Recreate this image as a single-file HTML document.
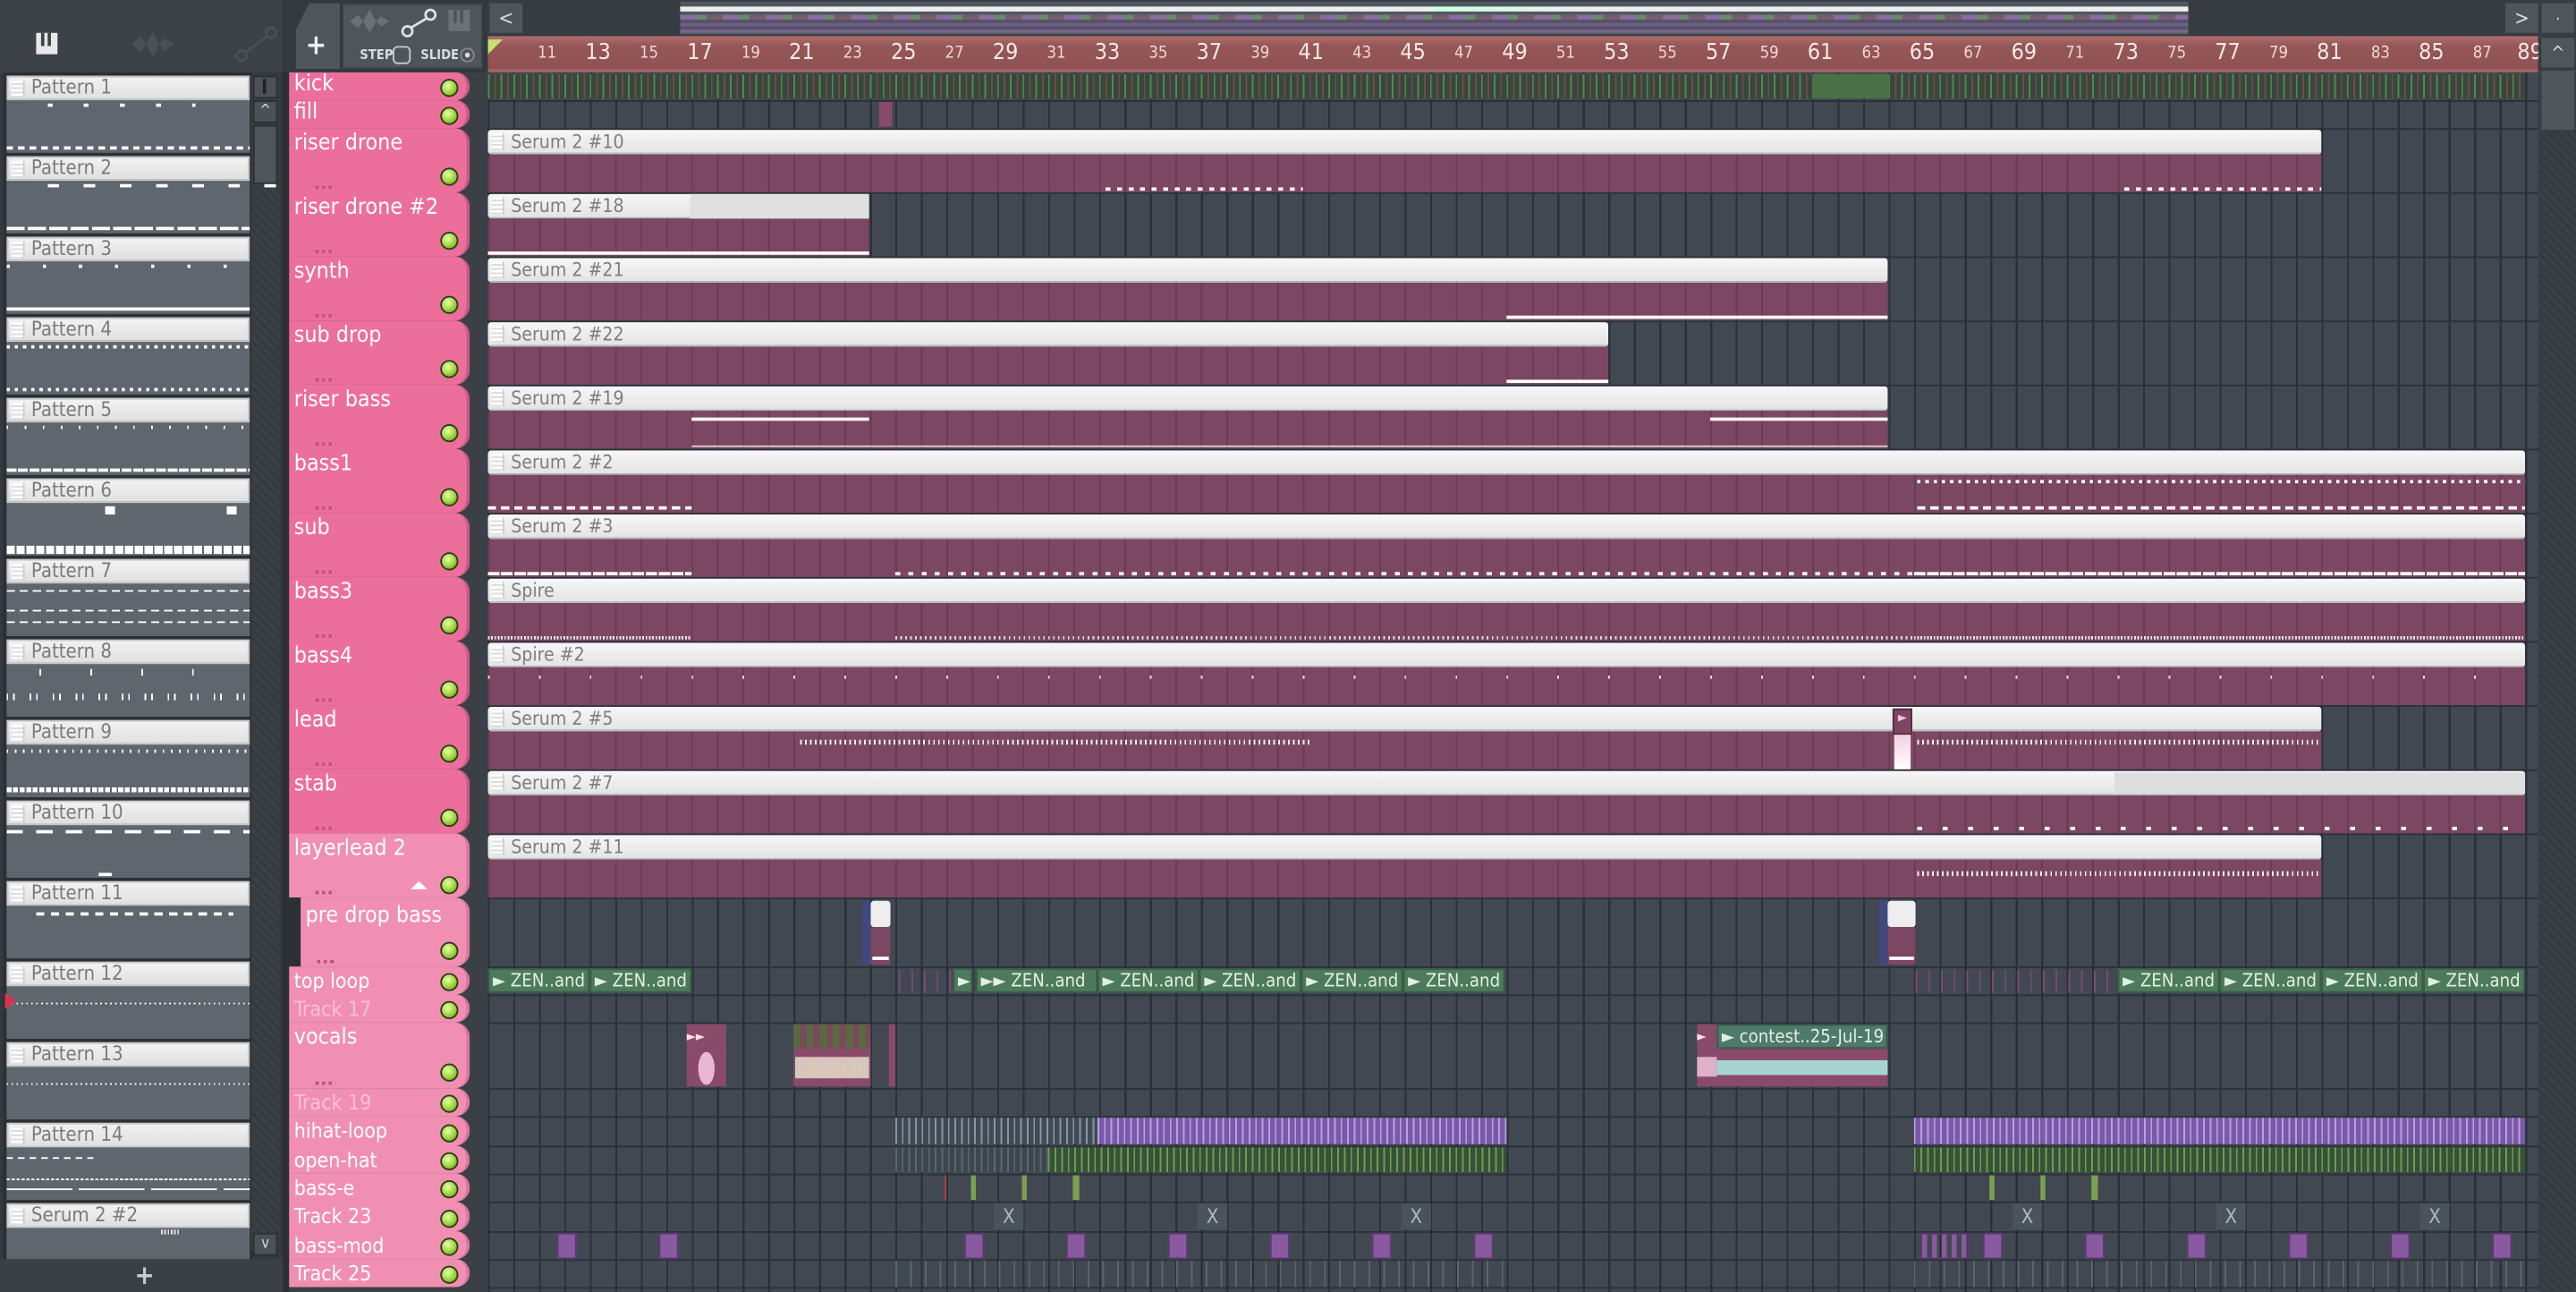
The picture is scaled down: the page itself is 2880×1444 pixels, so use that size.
<!DOCTYPE html>
<html><head><meta charset="utf-8">
<style>
*{margin:0;padding:0;box-sizing:border-box}
html,body{width:2880px;height:1444px;overflow:hidden;background:#3a4046}
#w{position:absolute;left:0;top:0;width:1568px;height:786px;transform:scale(1.83674,1.83715);transform-origin:0 0;background:#3a4046;font-family:"DejaVu Sans Condensed","DejaVu Sans","Liberation Sans",sans-serif;overflow:hidden}
.a{position:absolute}
.pat{position:absolute;left:4px;width:148px;height:47px;background:#5f666e}
.pat .h{position:absolute;left:0;top:0;width:148px;height:15px;background:linear-gradient(#f2f2f2,#e0e0e0);border:1px solid #c8c8c8;color:#7b7b7b;font-size:12px;line-height:13px;padding-left:14px}
.pat .h:before,.s .h:before{content:"";position:absolute;left:2px;top:2px;width:7px;height:10px;background:repeating-linear-gradient(#fff 0 1.5px,#ddd 1.5px 2.6px);border-right:1px solid #ccc}
.pat .n{position:absolute;left:0;width:148px;height:2px;background:repeating-linear-gradient(90deg,#fff 0 4px,transparent 4px 7px)}
.th{position:absolute;left:176px;width:110px;background:#ec6f9b;border-radius:0 9px 9px 0;color:#fff;font-size:13.5px;line-height:15px;padding-left:3px;padding-top:2px;border-right:2px solid #c85a80}
.th.l{background:#f08fb2;border-right-color:#d77799}
.th .led{position:absolute;right:5px;bottom:2px;width:11px;height:11px;border-radius:50%;background:radial-gradient(circle at 40% 35%,#e8ffb0,#9cd43a 55%,#5a8a1a);border:1.5px solid #2c3a18}
.th .dots{position:absolute;left:16px;bottom:2px;width:12px;height:2px;background:repeating-linear-gradient(90deg,#c0507a 0 2px,transparent 2px 4px)}
.s{position:absolute}
.s .h{position:absolute;left:0;top:0;right:0;height:15px;background:linear-gradient(#f7f7f7,#e4e4e4);border-radius:2px;border-bottom:1px solid #bbb;color:#7e7e7e;font-size:11.5px;line-height:14px;padding-left:14px}
.s .b{position:absolute;left:0;right:0;top:15px;bottom:0;background:repeating-linear-gradient(90deg,#6a3a53 0 1px,#7b4762 1px 15.5px)}
.g{position:absolute;left:297px;top:44px;width:1248px;height:742px;background:repeating-linear-gradient(90deg,#2b3038 0 1.2px,#414852 1.2px 15.5px)}
.hl{position:absolute;left:297px;width:1248px;height:1px;background:#2b3038}
.rn{position:absolute;top:27px;color:#f3d6d6;font-size:10px;transform:translateX(-50%)}
.rn.b{font-size:13.5px;top:24px;color:#fbe8e8}
.zen{position:absolute;height:15px;background:#4d7a5c;border:1px solid #3a5c45;color:#e0f0e0;font-size:11px;line-height:13px;padding-left:2px;overflow:hidden;white-space:nowrap}
.pm{position:absolute;height:16px;background:#8a5aa0;border:1px solid #5a3a70}
</style></head><body><div id="w">

<div class="a" style="left:0;top:0;width:176px;height:44px;background:#3c4247"></div>
<div class="a" style="left:22px;top:20px;width:13px;height:13px;background:#e8e8e8"></div>
<div class="a" style="left:25px;top:20px;width:1.5px;height:8px;background:#3c4247"></div>
<div class="a" style="left:29px;top:20px;width:1.5px;height:8px;background:#3c4247"></div>
<svg class="a" style="left:78px;top:18px" width="30" height="18"><path d="M2 9 L8 4 L11 9 L15 1 L19 9 L22 5 L28 9 L22 13 L19 9 L15 17 L11 9 L8 14 Z" fill="#4a5156"/></svg>
<svg class="a" style="left:143px;top:16px" width="28" height="22"><circle cx="4" cy="18" r="3" fill="none" stroke="#4a5156" stroke-width="1.6"/><circle cx="22" cy="4" r="3" fill="none" stroke="#4a5156" stroke-width="1.6"/><path d="M6 16 L20 6" stroke="#4a5156" stroke-width="1.6"/></svg>
<div class="a" style="left:0;top:44px;width:176px;height:742px;background:#33393e"></div>
<div class="a" style="left:2px;top:44px;width:152px;height:722px;background:#2b3034"></div>
<div class="a" style="left:153px;top:46px;width:17px;height:714px;background:repeating-linear-gradient(45deg,#3a4045 0 2px,#343a3f 2px 4px)"></div>
<div class="a" style="left:154px;top:46px;width:15px;height:14px;background:#4a5258;border:1px solid #2a2f33"></div>
<div class="a" style="left:160px;top:48px;width:2px;height:9px;background:#222"></div>
<div class="a" style="left:154px;top:61px;width:15px;height:14px;background:#4a5258;border:1px solid #2a2f33;color:#ddd;font-size:9px;text-align:center;line-height:12px">^</div>
<div class="a" style="left:154px;top:76px;width:15px;height:36px;background:#4e565c;border:1px solid #2a2f33"></div>
<div class="a" style="left:154px;top:750px;width:15px;height:14px;background:#4a5258;border:1px solid #2a2f33;color:#ddd;font-size:9px;text-align:center;line-height:12px">v</div>
<div class="a" style="left:0;top:766px;width:176px;height:20px;background:#3a4045;color:#c8ccd0;font-size:16px;text-align:center;line-height:20px;font-weight:bold">+</div>

<div class="pat" style="top:46px"><div class="h">Pattern 1</div><div class="n" style="top:17px;width:90px;left:25px;background:repeating-linear-gradient(90deg,#fff 0 3px,transparent 3px 22px)"></div><div class="n" style="top:43px"></div></div>
<div class="pat" style="top:95px"><div class="h">Pattern 2</div><div class="n" style="top:17px;left:25px;width:145px;background:repeating-linear-gradient(90deg,#fff 0 7px,transparent 7px 22px)"></div><div class="n" style="top:43px;background:repeating-linear-gradient(90deg,#fff 0 11px,transparent 11px 13px)"></div></div>
<div class="pat" style="top:144px"><div class="h">Pattern 3</div><div class="n" style="top:17px;background:repeating-linear-gradient(90deg,#fff 0 2px,transparent 2px 22px)"></div><div class="n" style="top:43px;background:#fff"></div></div>
<div class="pat" style="top:193px"><div class="h">Pattern 4</div><div class="n" style="top:17px;background:repeating-linear-gradient(90deg,#fff 0 2px,transparent 2px 5px)"></div><div class="n" style="top:43px;background:repeating-linear-gradient(90deg,#fff 0 2px,transparent 2px 5px)"></div></div>
<div class="pat" style="top:242px"><div class="h">Pattern 5</div><div class="n" style="top:17px;background:repeating-linear-gradient(90deg,#fff 0 1px,transparent 1px 11px)"></div><div class="n" style="top:43px;background:repeating-linear-gradient(90deg,#fff 0 6px,transparent 6px 7px)"></div></div>
<div class="pat" style="top:291px"><div class="h">Pattern 6</div><div class="a" style="left:60px;top:17px;width:6px;height:5px;background:#fff"></div><div class="a" style="left:134px;top:17px;width:6px;height:5px;background:#fff"></div><div class="n" style="top:41px;height:5px;background:repeating-linear-gradient(90deg,#fff 0 5px,transparent 5px 6px)"></div></div>
<div class="pat" style="top:340px"><div class="h">Pattern 7</div><div class="n" style="top:19px;height:1px;background:repeating-linear-gradient(90deg,#fff 0 5px,transparent 5px 8px)"></div><div class="n" style="top:31px;height:1px;background:repeating-linear-gradient(90deg,#fff 0 5px,transparent 5px 8px)"></div><div class="n" style="top:38px;height:1px;background:repeating-linear-gradient(90deg,#fff 0 5px,transparent 5px 8px)"></div></div>
<div class="pat" style="top:389px"><div class="h">Pattern 8</div><div class="n" style="top:18px;height:4px;width:110px;left:20px;background:repeating-linear-gradient(90deg,#fff 0 1px,transparent 1px 31px)"></div><div class="n" style="top:33px;height:4px;background:repeating-linear-gradient(90deg,#fff 0 1px,transparent 1px 4px,#fff 4px 5px,transparent 5px 14px)"></div></div>
<div class="pat" style="top:438px"><div class="h">Pattern 9</div><div class="n" style="top:18px;background:repeating-linear-gradient(90deg,#fff 0 1px,transparent 1px 5px)"></div><div class="n" style="top:41px;height:3px;background:repeating-linear-gradient(90deg,#fff 0 3px,transparent 3px 4px)"></div></div>
<div class="pat" style="top:487px"><div class="h">Pattern 10</div><div class="n" style="top:18px;background:repeating-linear-gradient(90deg,#fff 0 10px,transparent 10px 18px)"></div><div class="a" style="left:56px;top:44px;width:8px;height:2px;background:#fff"></div></div>
<div class="pat" style="top:536px"><div class="h">Pattern 11</div><div class="n" style="top:19px;left:18px;width:120px;background:repeating-linear-gradient(90deg,#fff 0 5px,transparent 5px 9px)"></div></div>
<div class="pat" style="top:585px"><div class="h">Pattern 12</div><div class="n" style="top:25px;height:1px;background:repeating-linear-gradient(90deg,#fff 0 1px,transparent 1px 3px)"></div></div>
<div class="a" style="left:3px;top:604px;width:0;height:0;border-top:5px solid transparent;border-bottom:5px solid transparent;border-left:7px solid #e03050"></div>
<div class="pat" style="top:634px"><div class="h">Pattern 13</div><div class="n" style="top:25px;height:1px;background:repeating-linear-gradient(90deg,#fff 0 1px,transparent 1px 3px)"></div></div>
<div class="pat" style="top:683px"><div class="h">Pattern 14</div><div class="n" style="top:21px;height:1px;width:55px"></div><div class="n" style="top:34px;height:1px;background:repeating-linear-gradient(90deg,#fff 0 2px,transparent 2px 3px)"></div><div class="n" style="top:40px;height:1px;background:repeating-linear-gradient(90deg,#fff 0 40px,transparent 40px 44px)"></div></div>
<div class="pat" style="top:732px;height:34px"><div class="h">Serum 2 #2</div><div class="a" style="left:94px;top:16px;width:12px;height:3px;background:repeating-linear-gradient(90deg,#ddd 0 1px,transparent 1px 2px)"></div></div>

<div class="a" style="left:172px;top:0;width:125px;height:44px;background:#33393e"></div>
<div class="a" style="left:180px;top:2px;width:27px;height:40px;background:#4e565c;border-radius:8px 0 0 0;clip-path:polygon(30% 0,100% 0,100% 100%,0 100%,0 40%)"></div>
<div class="a" style="left:186px;top:18px;color:#eee;font-size:17px;font-weight:bold">+</div>
<div class="a" style="left:208px;top:2px;width:86px;height:40px;background:#4e565c;border:1px solid #3a4045"></div>
<svg class="a" style="left:212px;top:6px" width="26" height="14"><path d="M1 7 L6 3 L9 7 L13 0 L17 7 L20 4 L25 7 L20 10 L17 7 L13 14 L9 7 L6 11 Z" fill="#6a7278"/></svg>
<svg class="a" style="left:244px;top:4px" width="22" height="20"><circle cx="4" cy="15" r="3" fill="none" stroke="#dde2e6" stroke-width="1.5"/><circle cx="18" cy="5" r="3" fill="none" stroke="#dde2e6" stroke-width="1.5"/><path d="M6 13 L16 7" stroke="#dde2e6" stroke-width="1.5"/></svg>
<div class="a" style="left:273px;top:6px;width:13px;height:13px;background:#6a7278"></div>
<div class="a" style="left:276px;top:6px;width:1.5px;height:8px;background:#4e565c"></div>
<div class="a" style="left:280px;top:6px;width:1.5px;height:8px;background:#4e565c"></div>
<div class="a" style="left:219px;top:29px;color:#d8dde0;font-size:8px;font-weight:bold">STEP</div>
<div class="a" style="left:239px;top:28px;width:11px;height:11px;border:1.5px solid #c8cdd0;border-radius:3px"></div>
<div class="a" style="left:256px;top:29px;color:#d8dde0;font-size:8px;font-weight:bold">SLIDE</div>
<div class="a" style="left:280px;top:29px;width:9px;height:9px;border:1.5px solid #888;border-radius:50%"></div>
<div class="a" style="left:283px;top:32px;width:3px;height:3px;background:#ddd;border-radius:50%"></div>
<div class="a" style="left:297px;top:0;width:1271px;height:22px;background:#363c41"></div>
<div class="a" style="left:298px;top:2px;width:20px;height:18px;background:#4e565c;color:#ddd;font-size:12px;text-align:center;line-height:18px">&lt;</div>
<div class="a" style="left:1525px;top:2px;width:20px;height:18px;background:#4e565c;color:#ddd;font-size:12px;text-align:center;line-height:18px">&gt;</div>
<div class="a" style="left:1547px;top:2px;width:20px;height:18px;background:#4e565c;color:#ddd;font-size:10px;text-align:center;line-height:16px">.</div>
<div class="a" style="left:414px;top:1px;width:918px;height:20px;background:#4f585f"></div>
<div class="a" style="left:414px;top:4px;width:918px;height:3px;background:linear-gradient(90deg,#eee 0,#eee 50%,#cfd 50%,#eee 60%,#eee 100%)"></div>
<div class="a" style="left:414px;top:9px;width:918px;height:3px;background:repeating-linear-gradient(90deg,#8a6aa0 0 10px,#6a8a6a 10px 16px,#7a5a70 16px 26px)"></div>
<div class="a" style="left:414px;top:14px;width:918px;height:2px;background:#8a5aa8;opacity:.7"></div>
<div class="a" style="left:414px;top:18px;width:918px;height:2px;background:#9a6ab0;opacity:.6"></div>
<div class="a" style="left:297px;top:22px;width:1248px;height:22px;background:linear-gradient(#b06e6e,#955656 30%,#8f5252);border-bottom:2px solid #a76666"></div>
<div class="a" style="left:297px;top:24px;width:0;height:0;border-left:9px solid #c8e070;border-bottom:9px solid transparent"></div>
<div class="rn" style="left:333px">11</div><div class="rn b" style="left:364px">13</div><div class="rn" style="left:395px">15</div><div class="rn b" style="left:426px">17</div><div class="rn" style="left:457px">19</div><div class="rn b" style="left:488px">21</div><div class="rn" style="left:519px">23</div><div class="rn b" style="left:550px">25</div><div class="rn" style="left:581px">27</div><div class="rn b" style="left:612px">29</div><div class="rn" style="left:643px">31</div><div class="rn b" style="left:674px">33</div><div class="rn" style="left:705px">35</div><div class="rn b" style="left:736px">37</div><div class="rn" style="left:767px">39</div><div class="rn b" style="left:798px">41</div><div class="rn" style="left:829px">43</div><div class="rn b" style="left:860px">45</div><div class="rn" style="left:891px">47</div><div class="rn b" style="left:922px">49</div><div class="rn" style="left:953px">51</div><div class="rn b" style="left:984px">53</div><div class="rn" style="left:1015px">55</div><div class="rn b" style="left:1046px">57</div><div class="rn" style="left:1077px">59</div><div class="rn b" style="left:1108px">61</div><div class="rn" style="left:1139px">63</div><div class="rn b" style="left:1170px">65</div><div class="rn" style="left:1201px">67</div><div class="rn b" style="left:1232px">69</div><div class="rn" style="left:1263px">71</div><div class="rn b" style="left:1294px">73</div><div class="rn" style="left:1325px">75</div><div class="rn b" style="left:1356px">77</div><div class="rn" style="left:1387px">79</div><div class="rn b" style="left:1418px">81</div><div class="rn" style="left:1449px">83</div><div class="rn b" style="left:1480px">85</div><div class="rn" style="left:1511px">87</div><div class="rn b" style="left:1540px">89</div>
<div class="a" style="left:1545px;top:22px;width:23px;height:764px;background:repeating-linear-gradient(45deg,#3a4045 0 2px,#343a3f 2px 4px)"></div>
<div class="a" style="left:1547px;top:23px;width:20px;height:18px;background:#4e565c;color:#ddd;font-size:11px;text-align:center;line-height:20px">^</div>
<div class="a" style="left:1547px;top:43px;width:20px;height:36px;background:#4e565c"></div>

<div class="g"></div>
<div class="hl" style="top:61px"></div><div class="hl" style="top:78px"></div><div class="hl" style="top:117px"></div><div class="hl" style="top:156px"></div><div class="hl" style="top:195px"></div><div class="hl" style="top:234px"></div><div class="hl" style="top:273px"></div><div class="hl" style="top:312px"></div><div class="hl" style="top:351px"></div><div class="hl" style="top:390px"></div><div class="hl" style="top:429px"></div><div class="hl" style="top:468px"></div><div class="hl" style="top:507px"></div><div class="hl" style="top:546px"></div><div class="hl" style="top:588px"></div><div class="hl" style="top:605px"></div><div class="hl" style="top:622px"></div><div class="hl" style="top:662px"></div><div class="hl" style="top:679px"></div><div class="hl" style="top:697px"></div><div class="hl" style="top:714px"></div><div class="hl" style="top:731px"></div><div class="hl" style="top:749px"></div><div class="hl" style="top:766px"></div><div class="hl" style="top:783px"></div>

<div class="a" style="left:172px;top:44px;width:4px;height:742px;background:#2b3034"></div>
<div class="th" style="top:44px;height:17px;padding-top:0">kick<div class="led"></div></div>
<div class="th" style="top:61px;height:17px;padding-top:0">fill<div class="led"></div></div>
<div class="th" style="top:78px;height:39px">riser drone<div class="led" style="bottom:4px"></div><div class="dots"></div></div>
<div class="th" style="top:117px;height:39px">riser drone #2<div class="led" style="bottom:4px"></div><div class="dots"></div></div>
<div class="th" style="top:156px;height:39px">synth<div class="led" style="bottom:4px"></div><div class="dots"></div></div>
<div class="th" style="top:195px;height:39px">sub drop<div class="led" style="bottom:4px"></div><div class="dots"></div></div>
<div class="th" style="top:234px;height:39px">riser bass<div class="led" style="bottom:4px"></div><div class="dots"></div></div>
<div class="th" style="top:273px;height:39px">bass1<div class="led" style="bottom:4px"></div><div class="dots"></div></div>
<div class="th" style="top:312px;height:39px">sub<div class="led" style="bottom:4px"></div><div class="dots"></div></div>
<div class="th" style="top:351px;height:39px">bass3<div class="led" style="bottom:4px"></div><div class="dots"></div></div>
<div class="th" style="top:390px;height:39px">bass4<div class="led" style="bottom:4px"></div><div class="dots"></div></div>
<div class="th" style="top:429px;height:39px">lead<div class="led" style="bottom:4px"></div><div class="dots"></div></div>
<div class="th" style="top:468px;height:39px">stab<div class="led" style="bottom:4px"></div><div class="dots"></div></div>
<div class="th l" style="top:507px;height:39px">layerlead 2<div class="led" style="bottom:2px"></div><div class="dots"></div><div class="a" style="left:74px;top:29px;width:0;height:0;border-left:5px solid transparent;border-right:5px solid transparent;border-bottom:5px solid #fff"></div></div>
<div class="a" style="left:176px;top:546px;width:8px;height:42px;background:#2b3034"></div>
<div class="th l" style="top:546px;height:42px;left:183px;width:103px;padding-left:3px;padding-top:4px">pre drop bass<div class="led" style="bottom:4px"></div><div class="dots" style="left:10px"></div></div>
<div class="th l" style="top:588px;height:17px;font-size:12.5px;padding-top:1px">top loop<div class="led"></div></div>
<div class="th l" style="top:605px;height:17px;font-size:12.5px;padding-top:1px;color:#f7c0d4">Track 17<div class="led"></div></div>
<div class="th l" style="top:622px;height:40px">vocals<div class="led" style="bottom:4px"></div><div class="dots"></div></div>
<div class="th l" style="top:662px;height:17px;font-size:12.5px;padding-top:1px;color:#f7c0d4">Track 19<div class="led"></div></div>
<div class="th l" style="top:679px;height:18px;font-size:12.5px;padding-top:1px">hihat-loop<div class="led"></div></div>
<div class="th l" style="top:697px;height:17px;font-size:12.5px;padding-top:1px">open-hat<div class="led"></div></div>
<div class="th l" style="top:714px;height:17px;font-size:12.5px;padding-top:1px">bass-e<div class="led"></div></div>
<div class="th l" style="top:731px;height:18px;font-size:12.5px;padding-top:1px">Track 23<div class="led"></div></div>
<div class="th l" style="top:749px;height:17px;font-size:12.5px;padding-top:1px">bass-mod<div class="led"></div></div>
<div class="th l" style="top:766px;height:17px;font-size:12.5px;padding-top:1px">Track 25<div class="led"></div></div>

<div class="a" style="left:297px;top:45px;width:1240px;height:15px;background:repeating-linear-gradient(90deg,#4f8a48 0 1px,#3a4540 1px 4px,#6a5040 4px 5px,#3a4540 5px 7.75px)"></div>
<div class="a" style="left:1103px;top:45px;width:47px;height:15px;background:#4a7048"></div>
<div class="a" style="left:535px;top:62px;width:8px;height:15px;background:#8a4a6a"></div>

<div class="s" style="left:297px;top:79px;width:1116px;height:38px"><div class="h">Serum 2 #10</div><div class="b"></div><div class="a" style="left:376px;top:35px;width:120px;height:2px;background:repeating-linear-gradient(90deg,#fff 0 3px,transparent 3px 7px)"></div><div class="a" style="left:996px;top:35px;width:120px;height:2px;background:repeating-linear-gradient(90deg,#fff 0 3px,transparent 3px 7px)"></div></div>
<div class="s" style="left:297px;top:118px;width:232px;height:38px"><div class="h">Serum 2 #18</div><div class="b"></div><div class="a" style="left:0;top:35px;width:232px;height:2px;background:#fff"></div></div>
<div class="a" style="left:420px;top:118px;width:109px;height:15px;background:#e0e0e0"></div>
<div class="s" style="left:297px;top:157px;width:852px;height:38px"><div class="h">Serum 2 #21</div><div class="b"></div><div class="a" style="left:620px;top:35px;width:232px;height:2px;background:#fff"></div></div>
<div class="s" style="left:297px;top:196px;width:682px;height:38px"><div class="h">Serum 2 #22</div><div class="b"></div><div class="a" style="left:620px;top:35px;width:62px;height:2px;background:#fff"></div></div>
<div class="s" style="left:297px;top:235px;width:852px;height:38px"><div class="h">Serum 2 #19</div><div class="b"></div><div class="a" style="left:124px;top:19px;width:108px;height:2px;background:#fff"></div><div class="a" style="left:744px;top:19px;width:108px;height:2px;background:#fff"></div><div class="a" style="left:124px;top:36px;width:728px;height:1px;background:#dcc"></div></div>
<div class="s" style="left:297px;top:274px;width:1240px;height:38px"><div class="h">Serum 2 #2</div><div class="b"></div><div class="a" style="left:0;top:34px;width:124px;height:2px;background:repeating-linear-gradient(90deg,#fff 0 5px,transparent 5px 8px)"></div><div class="a" style="left:870px;top:34px;width:370px;height:2px;background:repeating-linear-gradient(90deg,#fff 0 5px,transparent 5px 8px)"></div><div class="a" style="left:870px;top:18px;width:370px;height:2px;background:repeating-linear-gradient(90deg,#fff 0 2px,transparent 2px 5px)"></div></div>
<div class="s" style="left:297px;top:313px;width:1240px;height:38px"><div class="h">Serum 2 #3</div><div class="b"></div><div class="a" style="left:0;top:35px;width:124px;height:2px;background:repeating-linear-gradient(90deg,#fff 0 7px,transparent 7px 8px)"></div><div class="a" style="left:248px;top:35px;width:620px;height:2px;background:repeating-linear-gradient(90deg,#fff 0 3px,transparent 3px 8px)"></div><div class="a" style="left:868px;top:35px;width:372px;height:2px;background:repeating-linear-gradient(90deg,#fff 0 7px,transparent 7px 8px)"></div></div>
<div class="s" style="left:297px;top:352px;width:1240px;height:38px"><div class="h">Spire</div><div class="b"></div><div class="a" style="left:0;top:35px;width:124px;height:2px;background:repeating-linear-gradient(90deg,#eee 0 1px,transparent 1px 2px)"></div><div class="a" style="left:248px;top:35px;width:620px;height:2px;background:repeating-linear-gradient(90deg,#ddd 0 1px,transparent 1px 3px)"></div><div class="a" style="left:868px;top:35px;width:372px;height:2px;background:repeating-linear-gradient(90deg,#eee 0 1px,transparent 1px 2px)"></div></div>
<div class="s" style="left:297px;top:391px;width:1240px;height:38px"><div class="h">Spire #2</div><div class="b"></div><div class="a" style="left:0;top:20px;width:1240px;height:2px;background:repeating-linear-gradient(90deg,#ddd 0 1px,transparent 1px 31px)"></div></div>
<div class="s" style="left:297px;top:430px;width:1116px;height:38px"><div class="h">Serum 2 #5</div><div class="b"></div><div class="a" style="left:190px;top:20px;width:310px;height:3px;background:repeating-linear-gradient(90deg,#eee 0 1px,transparent 1px 3px)"></div><div class="a" style="left:870px;top:20px;width:246px;height:3px;background:repeating-linear-gradient(90deg,#eee 0 1px,transparent 1px 3px)"></div></div>
<div class="a" style="left:1152px;top:431px;width:12px;height:16px;background:#7b4762;border:1px solid #5a2a40;color:#fbd;font-size:8px;text-align:center">&#9658;</div>
<div class="a" style="left:1153px;top:447px;width:10px;height:21px;background:linear-gradient(#f5d0e0,#fff)"></div>
<div class="s" style="left:297px;top:469px;width:1240px;height:38px"><div class="h">Serum 2 #7</div><div class="b"></div><div class="a" style="left:990px;top:1px;width:250px;height:13px;background:#dedede"></div><div class="a" style="left:870px;top:34px;width:370px;height:2px;background:repeating-linear-gradient(90deg,#fff 0 3px,transparent 3px 15.5px)"></div></div>
<div class="s" style="left:297px;top:508px;width:1116px;height:38px"><div class="h">Serum 2 #11</div><div class="b"></div><div class="a" style="left:870px;top:22px;width:246px;height:3px;background:repeating-linear-gradient(90deg,#eee 0 1px,transparent 1px 3px)"></div></div>

<div class="a" style="left:525px;top:548px;width:5px;height:39px;background:#404880"></div>
<div class="a" style="left:530px;top:548px;width:12px;height:16px;background:#eee;border-radius:2px"></div>
<div class="a" style="left:530px;top:564px;width:12px;height:23px;background:#7b4762"></div>
<div class="a" style="left:531px;top:582px;width:10px;height:2px;background:#fff"></div>
<div class="a" style="left:1144px;top:548px;width:5px;height:39px;background:#404880"></div>
<div class="a" style="left:1149px;top:548px;width:17px;height:16px;background:#eee;border-radius:2px"></div>
<div class="a" style="left:1149px;top:564px;width:17px;height:23px;background:#7b4762"></div>
<div class="a" style="left:1150px;top:582px;width:15px;height:2px;background:#fff"></div>

<div class="zen" style="left:297px;top:589px;width:62px">&#9658; ZEN..and</div>
<div class="zen" style="left:359px;top:589px;width:62px">&#9658; ZEN..and</div>
<div class="a" style="left:547px;top:590px;width:38px;height:14px;background:repeating-linear-gradient(90deg,#7a4a70 0 1px,transparent 1px 7.75px)"></div>
<div class="zen" style="left:580px;top:589px;width:12px">&#9658;</div>
<div class="zen" style="left:594px;top:589px;width:74px">&#9658;&#9658; ZEN..and</div>
<div class="zen" style="left:668px;top:589px;width:62px">&#9658; ZEN..and</div>
<div class="zen" style="left:730px;top:589px;width:62px">&#9658; ZEN..and</div>
<div class="zen" style="left:792px;top:589px;width:62px">&#9658; ZEN..and</div>
<div class="zen" style="left:854px;top:589px;width:62px">&#9658; ZEN..and</div>
<div class="a" style="left:1166px;top:590px;width:124px;height:14px;background:repeating-linear-gradient(90deg,#7a4a70 0 1px,transparent 1px 7.75px)"></div>
<div class="zen" style="left:1289px;top:589px;width:62px">&#9658; ZEN..and</div>
<div class="zen" style="left:1351px;top:589px;width:62px">&#9658; ZEN..and</div>
<div class="zen" style="left:1413px;top:589px;width:62px">&#9658; ZEN..and</div>
<div class="zen" style="left:1475px;top:589px;width:62px">&#9658; ZEN..and</div>

<div class="a" style="left:418px;top:623px;width:24px;height:15px;background:#8a4a6a;color:#fdd;font-size:8px;line-height:15px">&#9658;&#9658;</div>
<div class="a" style="left:418px;top:638px;width:24px;height:23px;background:#8a4a6a"></div>
<div class="a" style="left:425px;top:640px;width:10px;height:20px;background:#e8b8d0;border-radius:50%"></div>
<div class="a" style="left:483px;top:623px;width:47px;height:15px;background:repeating-linear-gradient(90deg,#5a6a40 0 4px,#7a4a5a 4px 8px)"></div>
<div class="a" style="left:483px;top:638px;width:47px;height:23px;background:#8a4a6a"></div>
<div class="a" style="left:484px;top:643px;width:45px;height:13px;background:repeating-linear-gradient(90deg,#c8d4b0 0 1px,#e8b8c8 1px 2px)"></div>
<div class="a" style="left:541px;top:623px;width:4px;height:38px;background:#8a4a6a"></div>
<div class="a" style="left:1033px;top:623px;width:12px;height:15px;background:#8a4a6a;color:#fdd;font-size:8px;line-height:15px">&#9658;</div>
<div class="zen" style="left:1045px;top:623px;width:104px;height:15px;background:#4d7a6c;font-size:11px">&#9658; contest..25-Jul-19</div>
<div class="a" style="left:1033px;top:638px;width:116px;height:23px;background:#8a4a6a"></div>
<div class="a" style="left:1033px;top:643px;width:12px;height:12px;background:#e0b0c8"></div>
<div class="a" style="left:1045px;top:645px;width:104px;height:9px;background:#a8d4d0"></div>

<div class="a" style="left:545px;top:680px;width:124px;height:16px;background:repeating-linear-gradient(90deg,#8a95a0 0 1px,#404a54 1px 4px)"></div>
<div class="a" style="left:668px;top:680px;width:249px;height:16px;background:repeating-linear-gradient(90deg,#b8a0e0 0 1px,#7a5aa8 1px 4px)"></div>
<div class="a" style="left:1165px;top:680px;width:372px;height:16px;background:repeating-linear-gradient(90deg,#b8a0e0 0 1px,#7a5aa8 1px 4px)"></div>
<div class="a" style="left:545px;top:698px;width:93px;height:15px;background:repeating-linear-gradient(90deg,#5a6870 0 1px,#3e474e 1px 4px)"></div>
<div class="a" style="left:638px;top:698px;width:279px;height:15px;background:repeating-linear-gradient(90deg,#6aa050 0 1px,#3a5038 1px 4px)"></div>
<div class="a" style="left:1165px;top:698px;width:372px;height:15px;background:repeating-linear-gradient(90deg,#6aa050 0 1px,#3a5038 1px 4px)"></div>
<div class="a" style="left:591px;top:715px;width:3px;height:15px;background:#7aa050"></div>
<div class="a" style="left:622px;top:715px;width:3px;height:15px;background:#7aa050"></div>
<div class="a" style="left:653px;top:715px;width:4px;height:15px;background:#7aa050"></div>
<div class="a" style="left:575px;top:715px;width:1px;height:15px;background:#b04040"></div>
<div class="a" style="left:1211px;top:715px;width:3px;height:15px;background:#7aa050"></div>
<div class="a" style="left:1242px;top:715px;width:3px;height:15px;background:#7aa050"></div>
<div class="a" style="left:1273px;top:715px;width:4px;height:15px;background:#7aa050"></div>
<div class="a" style="left:605px;top:732px;width:18px;height:16px;background:#4a525c;color:#b0b8c0;font-size:12px;text-align:center;line-height:16px">X</div>
<div class="a" style="left:729px;top:732px;width:18px;height:16px;background:#4a525c;color:#b0b8c0;font-size:12px;text-align:center;line-height:16px">X</div>
<div class="a" style="left:853px;top:732px;width:18px;height:16px;background:#4a525c;color:#b0b8c0;font-size:12px;text-align:center;line-height:16px">X</div>
<div class="a" style="left:1225px;top:732px;width:18px;height:16px;background:#4a525c;color:#b0b8c0;font-size:12px;text-align:center;line-height:16px">X</div>
<div class="a" style="left:1349px;top:732px;width:18px;height:16px;background:#4a525c;color:#b0b8c0;font-size:12px;text-align:center;line-height:16px">X</div>
<div class="a" style="left:1473px;top:732px;width:18px;height:16px;background:#4a525c;color:#b0b8c0;font-size:12px;text-align:center;line-height:16px">X</div>
<div class="pm" style="left:339px;top:750px;width:12px"></div><div class="pm" style="left:401px;top:750px;width:12px"></div>
<div class="pm" style="left:587px;top:750px;width:12px"></div><div class="pm" style="left:649px;top:750px;width:12px"></div>
<div class="pm" style="left:711px;top:750px;width:12px"></div><div class="pm" style="left:773px;top:750px;width:12px"></div>
<div class="pm" style="left:835px;top:750px;width:12px"></div><div class="pm" style="left:897px;top:750px;width:12px"></div>
<div class="pm" style="left:1169px;top:750px;width:30px;background:repeating-linear-gradient(90deg,#8a5aa0 0 3px,transparent 3px 6px)"></div>
<div class="pm" style="left:1207px;top:750px;width:12px"></div><div class="pm" style="left:1269px;top:750px;width:12px"></div>
<div class="pm" style="left:1331px;top:750px;width:12px"></div><div class="pm" style="left:1393px;top:750px;width:12px"></div>
<div class="pm" style="left:1455px;top:750px;width:12px"></div><div class="pm" style="left:1517px;top:750px;width:12px"></div>
<div class="a" style="left:545px;top:767px;width:372px;height:16px;background:repeating-linear-gradient(90deg,#5a6570 0 1px,transparent 1px 9px)"></div>
<div class="a" style="left:1165px;top:767px;width:372px;height:16px;background:repeating-linear-gradient(90deg,#5a6570 0 1px,transparent 1px 9px)"></div>
</div></body></html>
